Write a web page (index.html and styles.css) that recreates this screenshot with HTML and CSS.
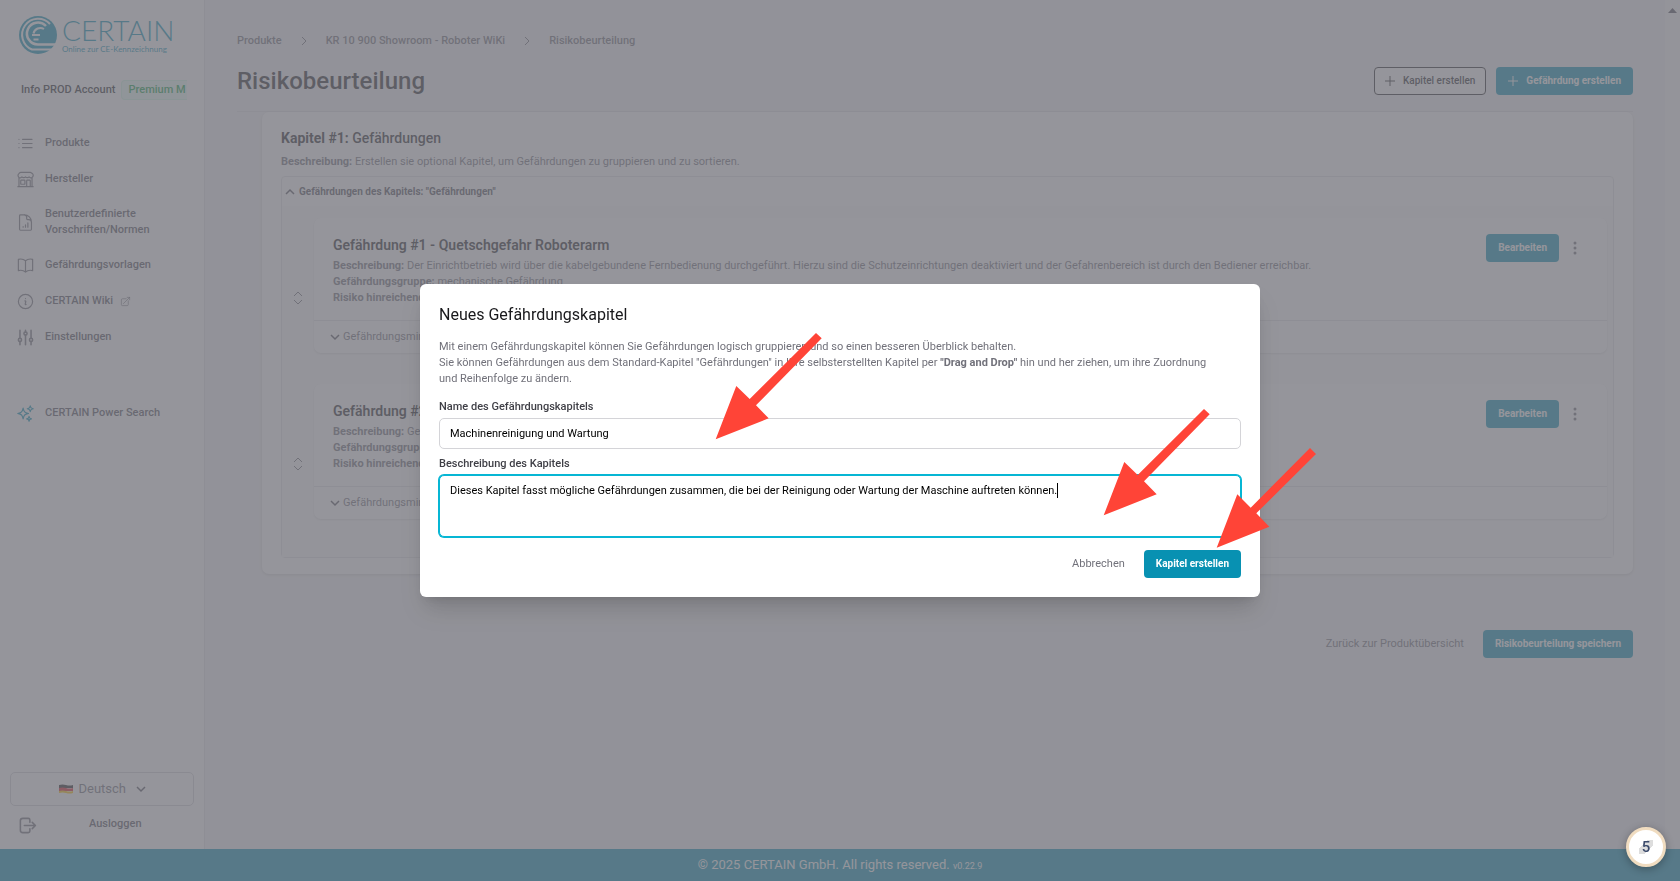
FILE: index.html
```html
<!DOCTYPE html>
<html lang="de">
<head>
  <meta charset="UTF-8" />
  <meta name="viewport" content="width=device-width, initial-scale=1.0"/>
  <title>CERTAIN - Risikobeurteilung</title>
  <link rel="stylesheet" href="styles.css">
</head>
<body>

<div class="shell">
  <aside class="sidebar">
    <a class="logo" href="#" aria-label="CERTAIN">
      <svg width="38" height="38" viewBox="0 0 38 38">
        <circle cx="19" cy="19" r="19" fill="#0891b2"/>
        <path d="M31 8A16 16 0 1 0 13 33.500H36" fill="none" stroke="#fff" stroke-width="2"/>
        <path d="M27 10A11 11 0 1 0 19 28.500H38" fill="none" stroke="#fff" stroke-width="2.500"/>
        <path d="M25 13A7 7 0 0 0 14.500 17.500M13 19h8M14.500 23.500h5" fill="none" stroke="#fff" stroke-width="2"/>
      </svg>
      <span class="logo-text">
        <span class="logo-name">CERTAIN</span>
        <span class="logo-sub">Online zur CE-Kennzeichnung</span>
      </span>
    </a>

    <div class="account">
      <span>Info PROD Account</span>
      <span class="plan">Premium M</span>
    </div>

    <nav class="nav">
      <a href="#">
        <svg class="icon" viewBox="0 0 24 24"><path d="M8.250 6.750h12M8.250 12h12M8.250 17.250h12M3.750 6.750h.01M3.750 12h.01M3.750 17.250h.01"/></svg>
        Produkte
      </a>
      <a href="#">
        <svg class="icon" viewBox="0 0 24 24"><path d="M13.500 21v-7.500a.75.75 0 0 1 .75-.75h3a.75.75 0 0 1 .75.75V21m-4.500 0H2.360m11.140 0H18m0 0h3.640m-1.390 0V9.350m-16.500 11.650V9.350m0 0a3 3 0 0 0 3.750-.62 3 3 0 0 0 4.500 0 3 3 0 0 0 4.500 0 3 3 0 0 0 3.750.61 3 3 0 0 0 .62-4.720L19.200 3.440A1.500 1.500 0 0 0 18.130 3H5.870a1.500 1.500 0 0 0-1.060.44L3.620 4.630a3 3 0 0 0 .13 4.720M6.750 18h3.750a.75.75 0 0 0 .75-.75V13.500a.75.75 0 0 0-.75-.75H6.750a.75.75 0 0 0-.75.75v3.750c0 .41.34.75.75.75Z"/></svg>
        Hersteller
      </a>
      <a href="#" class="two-line">
        <svg class="icon" viewBox="0 0 24 24"><path d="M19.500 14.250v-2.620a3.370 3.370 0 0 0-3.370-3.370h-1.500a1.120 1.120 0 0 1-1.130-1.130v-1.500a3.370 3.370 0 0 0-3.370-3.380H5.620C5 2.250 4.500 2.750 4.500 3.370v17.250c0 .62.500 1.130 1.120 1.130h12.760c.62 0 1.120-.51 1.120-1.130V11.250a9 9 0 0 0-9-9M9 17.250v.75M12 15v3M15 12.500V18"/></svg>
        <span>Benutzerdefinierte Vorschriften/Normen</span>
      </a>
      <a href="#">
        <svg class="icon" viewBox="0 0 24 24"><path d="M12 6.040A9 9 0 0 0 6 3.750c-1.050 0-2.060.18-3 .51v14.250A9 9 0 0 1 6 18a9 9 0 0 1 6 2.290M12 6.040A9 9 0 0 1 18 3.750c1.050 0 2.060.18 3 .51v14.250A9 9 0 0 0 18 18a9 9 0 0 0-6 2.290M12 6.040v14.250"/></svg>
        Gefährdungsvorlagen
      </a>
      <a href="#">
        <svg class="icon" viewBox="0 0 24 24"><path d="m11.250 11.250.04-.02a.75.75 0 0 1 1.060.85l-.7 2.840a.75.75 0 0 0 1.060.85l.04-.02M21 12a9 9 0 1 1-18 0 9 9 0 0 1 18 0ZM12 8.250h.01v.01H12z"/></svg>
        CERTAIN Wiki
        <svg class="icon small" viewBox="0 0 24 24"><path d="M13.500 6H5.250A2.250 2.250 0 0 0 3 8.250v10.500A2.250 2.250 0 0 0 5.250 21h10.500A2.250 2.250 0 0 0 18 18.750V10.500m-10.500 6L21 3m0 0h-5.250M21 3v5.250"/></svg>
      </a>
      <a href="#">
        <svg class="icon thick" viewBox="0 0 24 24"><path d="M5 3v10M5 17v4M12 3v2M12 9v12M19 3v10M19 17v4"/><circle cx="5" cy="15" r="2"/><circle cx="12" cy="7" r="2"/><circle cx="19" cy="15" r="2"/></svg>
        Einstellungen
      </a>
      <a href="#" class="power-search">
        <svg class="icon" viewBox="0 0 24 24"><path d="M9.810 15.900 9 18.750l-.81-2.850a4.500 4.500 0 0 0-3.090-3.090L2.250 12l2.850-.81a4.500 4.500 0 0 0 3.090-3.090L9 5.250l.81 2.850a4.500 4.500 0 0 0 3.090 3.090l2.850.81-2.850.81a4.500 4.500 0 0 0-3.090 3.090ZM18.260 8.710 18 9.750l-.26-1.040a3.380 3.380 0 0 0-2.450-2.450L14.250 6l1.040-.26a3.380 3.380 0 0 0 2.450-2.450L18 2.250l.26 1.040a3.380 3.380 0 0 0 2.450 2.450L21.750 6l-1.040.26a3.380 3.380 0 0 0-2.450 2.450ZM16.890 20.570 16.500 21.750l-.39-1.180a2.250 2.250 0 0 0-1.430-1.430L13.500 18.750l1.180-.39a2.250 2.250 0 0 0 1.430-1.430l.39-1.180.39 1.180a2.250 2.250 0 0 0 1.430 1.430l1.180.39-1.180.39a2.250 2.250 0 0 0-1.430 1.430Z"/></svg>
        CERTAIN Power Search
      </a>
    </nav>

    <div class="language">
      <svg width="14" height="10" viewBox="0 0 14 10"><path d="M0 1q3.500-1 7 0t7 0v3H0z" fill="#222"/><path d="M0 4q3.500-1 7 0t7 0v3H0z" fill="#dd1c2a"/><path d="M0 7q3.500-1 7 0t7 0v2q-3.500 1-7 0t-7 0z" fill="#ffc400"/></svg>
      <select aria-label="Sprache">
        <option>Deutsch</option>
      </select>
      <svg class="chevron" viewBox="0 0 10 10"><path d="M1 3l4 4 4-4"/></svg>
    </div>
    <button class="logout">
      <svg class="icon thick" viewBox="0 0 24 24"><path d="M15 8V5a2 2 0 0 0-2-2H6a3 3 0 0 0-3 3v12a3 3 0 0 0 3 3h7a2 2 0 0 0 2-2v-3M8 12h14M18 8l4 4-4 4"/></svg>
      <span>Ausloggen</span>
    </button>
  </aside>

  <main class="main">
    <nav class="breadcrumb">
      <a href="#">Produkte</a>
      <svg class="chevron" viewBox="0 0 10 10"><path d="M3 1l4 4-4 4"/></svg>
      <a href="#">KR 10 900 Showroom - Roboter WiKi</a>
      <svg class="chevron" viewBox="0 0 10 10"><path d="M3 1l4 4-4 4"/></svg>
      <a href="#">Risikobeurteilung</a>
    </nav>

    <header class="page-header">
      <h1>Risikobeurteilung</h1>
      <button class="btn btn-outline"><svg class="plus" viewBox="0 0 10 10"><path d="M5 0v10M0 5h10"/></svg>Kapitel erstellen</button>
      <button class="btn"><svg class="plus" viewBox="0 0 10 10"><path d="M5 0v10M0 5h10"/></svg>Gefährdung erstellen</button>
    </header>

    <section class="chapter">
      <h2><strong>Kapitel #1:</strong> Gefährdungen</h2>
      <p class="chapter-text"><strong>Beschreibung:</strong> Erstellen sie optional Kapitel, um Gefährdungen zu gruppieren und zu sortieren.</p>

      <div class="hazards">
        <button class="hazards-toggle">
          <svg class="chevron" viewBox="0 0 10 10"><path d="M1 7l4-4 4 4"/></svg>
          Gefährdungen des Kapitels: "Gefährdungen"
        </button>
        <div class="hazard-list">
          <div class="hazard-row">
            <svg class="sort" viewBox="0 0 10 14"><path d="M1 5l4-4 4 4M1 9l4 4 4-4"/></svg>
            <article class="hazard">
              <div class="hazard-body">
                <div class="hazard-info">
                  <h3>Gefährdung #1 - Quetschgefahr Roboterarm</h3>
                  <p><strong>Beschreibung:</strong> Der Einrichtbetrieb wird über die kabelgebundene Fernbedienung durchgeführt. Hierzu sind die Schutzeinrichtungen deaktiviert und der Gefahrenbereich ist durch den Bediener erreichbar.</p>
                  <p><strong>Gefährdungsgruppe:</strong> mechanische Gefährdung</p>
                  <p><strong>Risiko hinreichend</strong></p>
                </div>
                <button class="btn">Bearbeiten</button>
                <button class="more" aria-label="Mehr"><svg width="4" height="14" viewBox="0 0 4 14"><circle cx="2" cy="2" r="1.500"/><circle cx="2" cy="7" r="1.500"/><circle cx="2" cy="12" r="1.500"/></svg></button>
              </div>
              <button class="measures"><svg class="chevron" viewBox="0 0 10 10"><path d="M1 3l4 4 4-4"/></svg>Gefährdungsminderung</button>
            </article>
          </div>
          <div class="hazard-row">
            <svg class="sort" viewBox="0 0 10 14"><path d="M1 5l4-4 4 4M1 9l4 4 4-4"/></svg>
            <article class="hazard">
              <div class="hazard-body">
                <div class="hazard-info">
                  <h3>Gefährdung #2</h3>
                  <p><strong>Beschreibung:</strong> Gefahr</p>
                  <p><strong>Gefährdungsgruppe:</strong></p>
                  <p><strong>Risiko hinreichend</strong></p>
                </div>
                <button class="btn">Bearbeiten</button>
                <button class="more" aria-label="Mehr"><svg width="4" height="14" viewBox="0 0 4 14"><circle cx="2" cy="2" r="1.500"/><circle cx="2" cy="7" r="1.500"/><circle cx="2" cy="12" r="1.500"/></svg></button>
              </div>
              <button class="measures"><svg class="chevron" viewBox="0 0 10 10"><path d="M1 3l4 4 4-4"/></svg>Gefährdungsminderung</button>
            </article>
          </div>
        </div>
      </div>
    </section>

    <div class="page-actions">
      <a href="#">Zurück zur Produktübersicht</a>
      <button class="btn">Risikobeurteilung speichern</button>
    </div>
  </main>

  <div class="scrollbar">
    <svg width="9" height="5" viewBox="0 0 9 5"><path d="M0 5l4.500-5L9 5z"/></svg>
  </div>
</div>

<footer class="footer">© 2025 CERTAIN GmbH. All rights reserved. <small>v0.22.9</small></footer>

<div class="overlay">
  <form class="modal" role="dialog" aria-labelledby="modalTitle">
    <h2 id="modalTitle">Neues Gefährdungskapitel</h2>
    <p>Mit einem Gefährdungskapitel können Sie Gefährdungen logisch gruppieren und so einen besseren Überblick behalten.<br>
      Sie können Gefährdungen aus dem Standard-Kapitel "Gefährdungen" in Ihre selbsterstellten Kapitel per <strong>"Drag and Drop"</strong> hin und her ziehen, um ihre Zuordnung<br>und Reihenfolge zu ändern.</p>

    <label for="chapterName">Name des Gefährdungskapitels</label>
    <input type="text" id="chapterName" value="Machinenreinigung und Wartung">

    <label for="chapterText">Beschreibung des Kapitels</label>
    <div class="field">
      <textarea id="chapterText">Dieses Kapitel fasst mögliche Gefährdungen zusammen, die bei der Reinigung oder Wartung der Maschine auftreten können.</textarea>
      <span class="caret"></span>
    </div>

    <div class="modal-actions">
      <button type="button" class="btn-link">Abbrechen</button>
      <button type="button" class="btn">Kapitel erstellen</button>
    </div>

    <svg class="arrow arrow-name" width="108" height="108" viewBox="0 0 108 108"><path d="M.7 107.300 21.300 54l13.400 13L101 1l5.700 5.300L41 73.300l12.700 13z"/></svg>
    <svg class="arrow arrow-text" width="108" height="108" viewBox="0 0 108 108"><path d="M.7 107.300 21.300 54l13.400 13L101 1l5.700 5.300L41 73.300l12.700 13z"/></svg>
    <svg class="arrow arrow-create" width="100" height="101" viewBox="0 0 100 101"><path d="M.7 100.700 21.300 47.300l13.400 13.400L94 1l6 6-59.700 59.300 13 13.400z"/></svg>
  </form>
</div>

<div class="step-badge">5</div>

</body>
</html>
```
FILE: styles.css
```css
* {
  box-sizing: border-box;
}
body {
  margin: 0;
  min-height: 100vh;
  display: flex;
  flex-direction: column;
  font-family: Roboto, "Open Sans", sans-serif;
  font-size: 11px;
  line-height: 16px;
  color: #71717a;
  background: #f4f4f5;
}
h1, h2, h3, p {
  margin: 0;
}
a {
  color: inherit;
  text-decoration: none;
}
button, input, select, textarea {
  font: inherit;
  color: inherit;
}
button {
  background: none;
  border: none;
  padding: 0;
  cursor: pointer;
}
svg {
  flex: none;
}
.shell {
  flex: 1;
  display: flex;
}

/* sidebar */
.sidebar {
  width: 205px;
  background: white;
  border-right: 1px solid #e4e4e7;
  padding: 16px 10px 14px;
  display: flex;
  flex-direction: column;
}
.logo {
  display: flex;
  gap: 5px;
  padding-left: 9px;
  color: #0891b2;
  font-family: Lato, sans-serif;
}
.logo-text {
  display: flex;
  flex-direction: column;
  white-space: nowrap;
}
.logo-name {
  font-size: 28px;
  font-weight: 300;
  line-height: 28px;
}
.logo-sub {
  font-size: 8px;
  line-height: 10px;
}
.account {
  display: flex;
  align-items: center;
  gap: 6px;
  margin: 26px 0 0 11px;
  white-space: nowrap;
  font-weight: 500;
  color: #27272a;
}
.plan {
  padding: 1px 1px 1px 6px;
  border: 1px solid #d1fae5;
  border-right: none;
  border-radius: 4px 0 0 4px;
  background: #ecfdf5;
  color: #16a34a;
}
.nav {
  margin-top: 25px;
  font-weight: 500;
  color: #52525b;
}
.nav a {
  display: flex;
  align-items: center;
  gap: 10px;
  min-height: 36px;
  padding-left: 6px;
}
.nav .two-line {
  min-height: 50px;
  padding-right: 40px;
}
.nav .power-search {
  margin-top: 40px;
}
.icon {
  width: 19px;
  height: 19px;
  fill: none;
  stroke: #71717a;
  stroke-width: 1.5;
  stroke-linecap: round;
  stroke-linejoin: round;
}
.power-search .icon {
  stroke: #0891b2;
}
.icon.small {
  width: 11px;
  height: 11px;
  margin-left: -3px;
}
.icon.thick {
  stroke-width: 2;
}
.chevron {
  width: 10px;
  height: 10px;
  fill: none;
  stroke: #52525b;
  stroke-width: 1.5;
}
.language {
  display: flex;
  align-items: center;
  justify-content: center;
  gap: 6px;
  height: 34px;
  margin-top: auto;
  border: 1px solid #d4d4d8;
  border-radius: 5px;
}
.language select {
  appearance: none;
  border: none;
  background: none;
  padding: 0;
  font-size: 13px;
}
.language .chevron {
  margin-left: 3px;
}
.logout {
  display: flex;
  align-items: flex-start;
  gap: 52px;
  margin-top: 10px;
  padding-left: 8px;
  font-weight: 500;
  color: #52525b;
}

/* page */
.main {
  flex: 1;
  padding: 33px 32px 32px;
}
.breadcrumb {
  display: flex;
  align-items: center;
  gap: 17px;
  font-weight: 500;
}
.breadcrumb .chevron {
  stroke: #71717a;
  stroke-width: 1;
}
.page-header {
  display: flex;
  align-items: center;
  gap: 10px;
  padding: 18px 0 16px;
  border-bottom: 1px solid #e4e4e7;
}
.page-header h1 {
  flex: 1;
  font-size: 24px;
  line-height: 28px;
  font-weight: 500;
  color: #27272a;
}
.btn {
  display: flex;
  align-items: center;
  gap: 8px;
  height: 28px;
  padding: 0 12px;
  border-radius: 4px;
  background: #0891b2;
  color: white;
  font-size: 10px;
  font-weight: 700;
  white-space: nowrap;
}
.btn-outline {
  padding: 0 10px;
  border: 1px solid #27272a;
  background: white;
  color: #27272a;
  font-weight: 500;
}
.plus {
  width: 10px;
  height: 10px;
  stroke: currentColor;
  stroke-width: 1;
}
.chapter {
  margin-left: 25px;
  padding: 16px 19px;
  border-radius: 7px;
  background: white;
  box-shadow: 0 1px 3px rgba(0,0,0,0.15);
}
.chapter h2 {
  font-size: 14px;
  line-height: 20px;
  font-weight: 500;
  color: #27272a;
}
.chapter-text {
  margin: 6px 0;
}
.hazards {
  border: 1px solid #e4e4e7;
  border-radius: 4px;
}
.hazards-toggle {
  display: flex;
  align-items: center;
  gap: 4px;
  height: 29px;
  padding-left: 3px;
  font-size: 10px;
  font-weight: 700;
  color: #52525b;
}
.hazard-list {
  display: flex;
  flex-direction: column;
  gap: 31px;
  padding: 12px 6px 38px 11px;
  background: #fafafa;
}
.hazard-row {
  display: flex;
  align-items: center;
  gap: 11px;
}
.sort {
  width: 10px;
  height: 14px;
  margin-top: 24px;
  fill: none;
  stroke: #71717a;
}
.hazard {
  flex: 1;
  border-radius: 7px;
  background: white;
  box-shadow: 0 1px 2px rgba(0,0,0,0.1);
}
.hazard-body {
  display: flex;
  align-items: flex-start;
  gap: 14px;
  padding: 16px 30px 14px 19px;
}
.hazard-info {
  flex: 1;
}
.hazard-info h3 {
  margin-bottom: 2px;
  font-size: 14px;
  line-height: 22px;
  font-weight: 600;
  color: #27272a;
}
.more {
  height: 28px;
}
.more svg {
  display: block;
  fill: #71717a;
}
.measures {
  display: flex;
  align-items: center;
  gap: 3px;
  width: 100%;
  height: 33px;
  padding-left: 16px;
  border-top: 1px solid #e4e4e7;
}
.page-actions {
  display: flex;
  justify-content: flex-end;
  align-items: center;
  gap: 19px;
  margin-top: 56px;
}
.scrollbar {
  width: 15px;
  padding-top: 2px;
  background: #fcfcfc;
  text-align: center;
}
.scrollbar svg {
  fill: #52525b;
}
.footer {
  height: 32px;
  line-height: 32px;
  background: #0891b2;
  color: white;
  font-size: 13px;
  text-align: center;
}
.footer small {
  font-size: 9px;
}

/* dialog */
.overlay {
  position: fixed;
  inset: 0;
  display: flex;
  align-items: center;
  justify-content: center;
  background: rgba(113,113,122,0.75);
}
.modal {
  position: relative;
  width: 840px;
  padding: 19px;
  border-radius: 6px;
  background: white;
  box-shadow: 0 16px 24px -4px rgba(0,0,0,0.15), 0 6px 10px -6px rgba(0,0,0,0.15);
}
.modal h2 {
  font-size: 16px;
  line-height: 24px;
  font-weight: 400;
  color: #18181b;
}
.modal p {
  margin: 12px 0;
}
.modal label {
  display: block;
  margin-bottom: 3px;
  font-weight: 500;
  color: #3f3f46;
}
.modal input, .modal textarea {
  display: block;
  width: 100%;
  padding: 7px 10px;
  border: 1px solid #d4d4d8;
  border-radius: 5px;
  background: white;
  color: black;
}
.modal input {
  height: 31px;
  margin-bottom: 7px;
}
.modal textarea {
  height: 62px;
  resize: none;
  border-color: #06b6d4;
  box-shadow: 0 0 0 1px #06b6d4;
}
.field {
  position: relative;
}
.caret {
  position: absolute;
  left: 618px;
  top: 8px;
  width: 1px;
  height: 15px;
  background: black;
}
.modal-actions {
  display: flex;
  justify-content: flex-end;
  gap: 19px;
  margin-top: 13px;
}
.arrow {
  position: absolute;
  fill: #ff4437;
}
.arrow-name {
  left: 295px;
  top: 48px;
}
.arrow-text {
  left: 683px;
  top: 124px;
}
.arrow-create {
  left: 796px;
  top: 163px;
}
.step-badge {
  position: fixed;
  right: 14px;
  bottom: 14px;
  width: 40px;
  height: 40px;
  border: 3px solid #f0dcc0;
  border-radius: 50%;
  background: linear-gradient(135deg, white 32%, #ddd 32%, #ddd 68%, white 68%) center / 14px 14px no-repeat white;
  box-shadow: 0 2px 8px rgba(0,0,0,0.3);
  color: #3b4a6b;
  font-size: 15px;
  line-height: 34px;
  font-weight: 500;
  text-align: center;
}
```
